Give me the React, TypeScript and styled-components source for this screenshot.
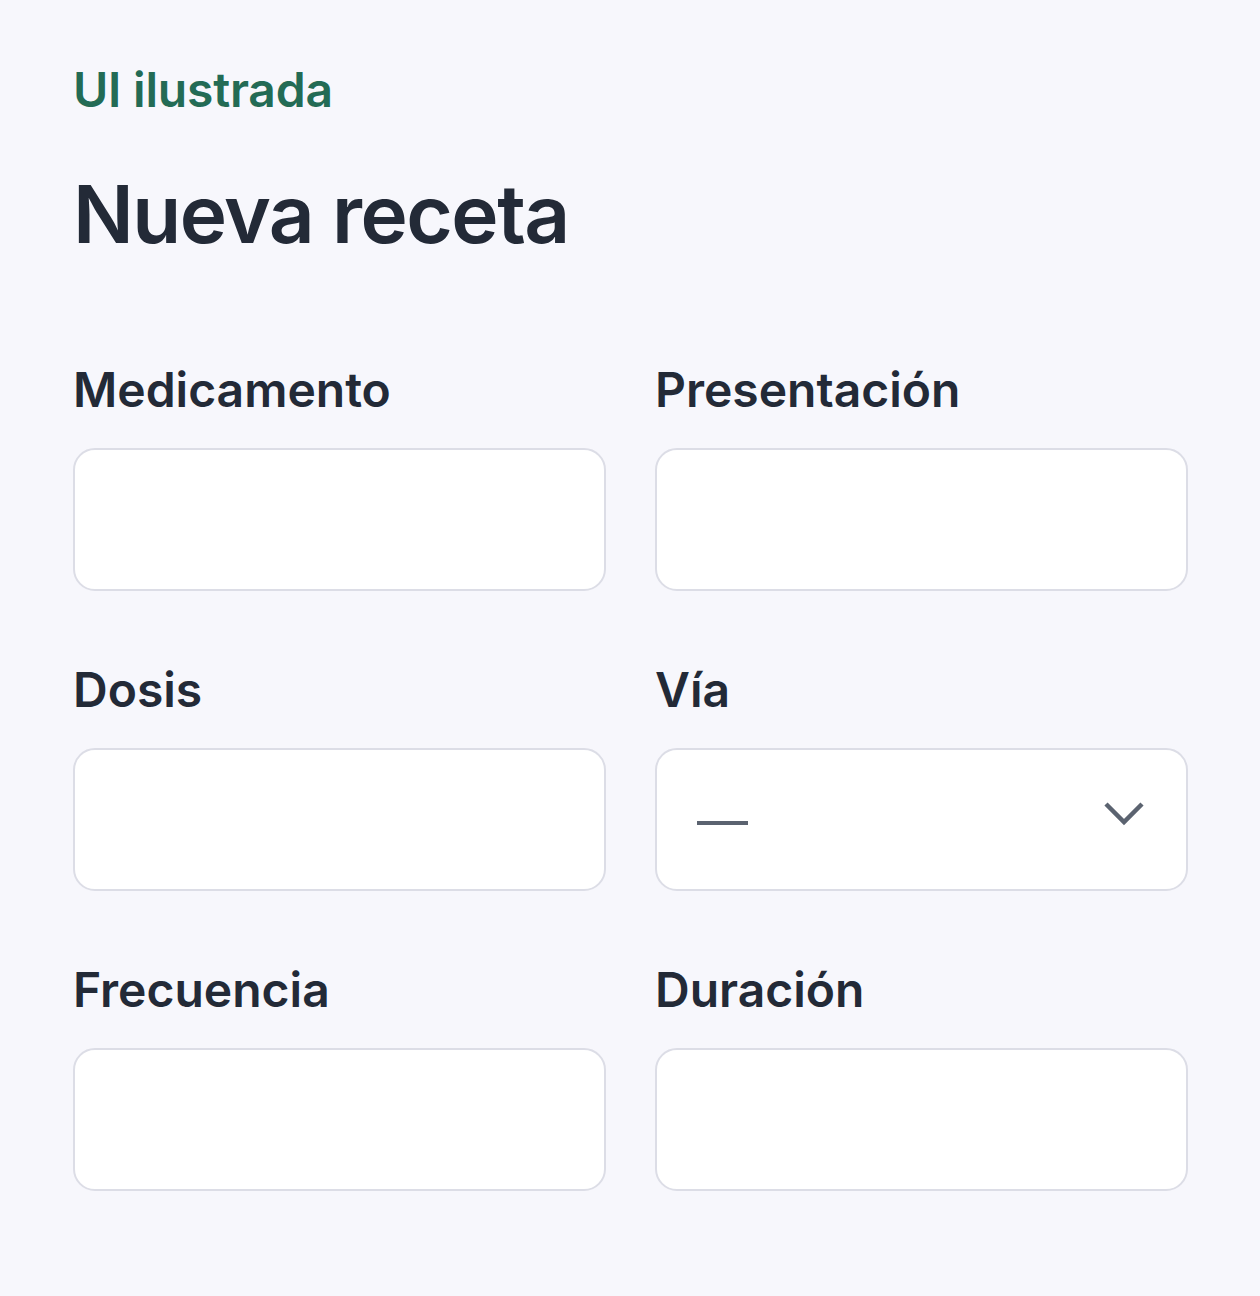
import React from 'react';
import styled, { createGlobalStyle } from 'styled-components';

const GlobalStyle = createGlobalStyle`
  html, body {
    margin: 0;
    padding: 0;
    background: #f7f7fc;
  }
  body {
    font-family: Inter, "Noto Sans", "Liberation Sans", sans-serif;
    color: #232a37;
  }
`;

const Page = styled.main`
  box-sizing: border-box;
  width: 1260px;
  min-height: 1296px;
  padding: 61px 72px 0 73px;
  background: #f7f7fc;
`;

const Eyebrow = styled.div`
  font-size: 48px;
  line-height: 1.2;
  font-weight: 600;
  color: #236b55;
  letter-spacing: -0.2px;
`;

const Title = styled.h1`
  margin: 47px 0 0;
  font-size: 80px;
  line-height: 1.2;
  font-weight: 600;
  letter-spacing: -1.5px;
  color: #232a37;
`;

const Form = styled.form`
  display: grid;
  grid-template-columns: 1fr 1fr;
  column-gap: 49px;
  row-gap: 69.4px;
  margin-top: 99px;
`;

const Field = styled.div`
  display: flex;
  flex-direction: column;
  gap: 30px;
`;

const Label = styled.label`
  font-size: 48px;
  line-height: 1.2;
  font-weight: 600;
  color: #232a37;
`;

const Input = styled.input`
  box-sizing: border-box;
  width: 100%;
  height: 143px;
  border: 2.5px solid #dcdde6;
  border-radius: 22px;
  background: #ffffff;
  padding: 0 40px;
  font: inherit;
  font-size: 46px;
  color: #232a37;
  outline: none;
`;

const Select = styled.div`
  box-sizing: border-box;
  display: flex;
  align-items: center;
  justify-content: space-between;
  height: 143px;
  border: 2.5px solid #dcdde6;
  border-radius: 22px;
  background: #ffffff;
  padding: 0 40px;
`;

const SelectValue = styled.span`
  display: block;
  width: 51px;
  height: 4px;
  margin-top: 7px;
  background: #5b6370;
`;

const ChevronBox = styled.span`
  display: flex;
  margin-bottom: 11px;
`;

const Chevron = () => (
  <ChevronBox>
    <svg width="44" height="28" viewBox="0 0 44 28" fill="none">
      <polyline points="4,4 22,22 40,4" stroke="#5b6370" strokeWidth="4.5" />
    </svg>
  </ChevronBox>
);

const fields = [
  { id: 'med', label: 'Medicamento' },
  { id: 'pres', label: 'Presentación' },
  { id: 'dosis', label: 'Dosis' },
  { id: 'via', label: 'Vía', select: true },
  { id: 'frec', label: 'Frecuencia' },
  { id: 'dur', label: 'Duración' },
];

export default function App() {
  return (
    <>
      <GlobalStyle />
      <Page>
        <Eyebrow>UI ilustrada</Eyebrow>
        <Title>Nueva receta</Title>
        <Form onSubmit={(e) => e.preventDefault()}>
          {fields.map((f) => (
            <Field key={f.id}>
              <Label htmlFor={f.id}>{f.label}</Label>
              {f.select ? (
                <Select id={f.id} role="combobox" aria-label={f.label}>
                  <SelectValue aria-label="—" />
                  <Chevron />
                </Select>
              ) : (
                <Input id={f.id} type="text" />
              )}
            </Field>
          ))}
        </Form>
      </Page>
    </>
  );
}
